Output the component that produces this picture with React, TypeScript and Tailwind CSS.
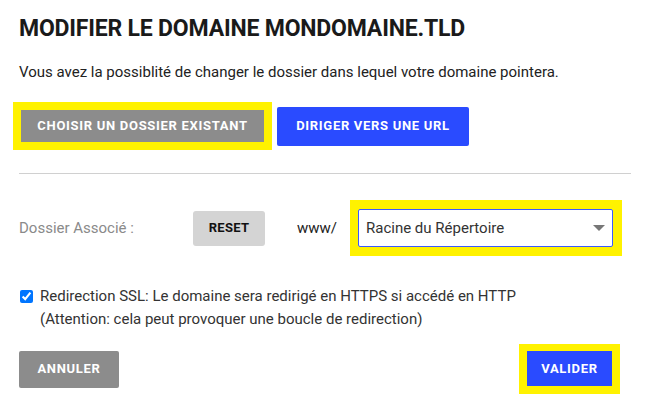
import React from "react";

export default function App() {
  return (
    <div className="w-[648px] h-[402px] bg-white overflow-hidden text-[#222]" style={{ fontFamily: "Roboto, 'Liberation Sans', sans-serif" }}>
      <div className="px-[19px] pt-[15px]">
        <h1 className="text-[23px] leading-[28px] font-bold tracking-[-0.2px] text-[#1a1a1a]">MODIFIER LE DOMAINE MONDOMAINE.TLD</h1>
        <p className="mt-[19px] text-[15px] leading-[20px] text-[#222]">
          Vous avez la possiblité de changer le dossier dans lequel votre domaine pointera.
        </p>
        <div className="mt-[20px] -ml-[6px] flex items-center gap-[5px]">
          <div className="bg-[#fff200] p-[8px]">
            <button className="h-[32px] w-[243px] bg-[#8c8c8c] text-white text-[13px] font-bold tracking-[0.7px]">CHOISIR UN DOSSIER EXISTANT</button>
          </div>
          <button className="h-[39px] w-[192px] rounded-[2px] bg-[#2a4bff] text-white text-[13px] font-bold tracking-[0.7px]">DIRIGER VERS UNE URL</button>
        </div>
        <div className="mt-[23px] h-[1px] w-[612px] bg-[#d0d0d0]" />
        <div className="mt-[26px] flex items-center">
          <div className="w-[174px] text-[15px] text-[#8a8a8a]">Dossier Associé :</div>
          <button className="h-[35px] w-[72px] rounded-[3px] bg-[#d4d4d4] text-[13px] font-bold tracking-[0.3px] text-[#111]">RESET</button>
          <div className="ml-[32px] w-[53px] text-[15px] text-[#222]">www/</div>
          <div className="bg-[#fff200] py-[9px] pl-[8px] pr-[9px]">
            <div className="h-[38px] w-[255px] border border-[#3b5bff] rounded-[2px] bg-white flex items-center justify-between pl-[7px] pr-[7px]">
              <span className="text-[15px] text-[#333]">Racine du Répertoire</span>
              <svg width="12" height="6" viewBox="0 0 12 6"><path d="M0 0h12L6 6z" fill="#777" /></svg>
            </div>
          </div>
        </div>
        <div className="mt-[29px] flex items-start gap-[7px]">
          <input type="checkbox" defaultChecked className="mt-[5px] ml-[1px] w-[13px] h-[13px] m-0" />
          <div className="text-[15px] leading-[23px] text-[#333]">
            <div>Redirection SSL: Le domaine sera redirigé en HTTPS si accédé en HTTP</div>
            <div>(Attention: cela peut provoquer une boucle de redirection)</div>
          </div>
        </div>
        <div className="mt-[13px] flex items-center justify-between w-[601px]">
          <button className="h-[37px] w-[100px] rounded-[2px] bg-[#8c8c8c] text-white text-[13px] font-bold tracking-[0.7px]">ANNULER</button>
          <div className="bg-[#fff200] px-[8px] pt-[7px] pb-[8px]">
            <button className="h-[35px] w-[85px] bg-[#2a4bff] text-white text-[13px] font-bold tracking-[0.7px]">VALIDER</button>
          </div>
        </div>
      </div>
    </div>
  );
}
